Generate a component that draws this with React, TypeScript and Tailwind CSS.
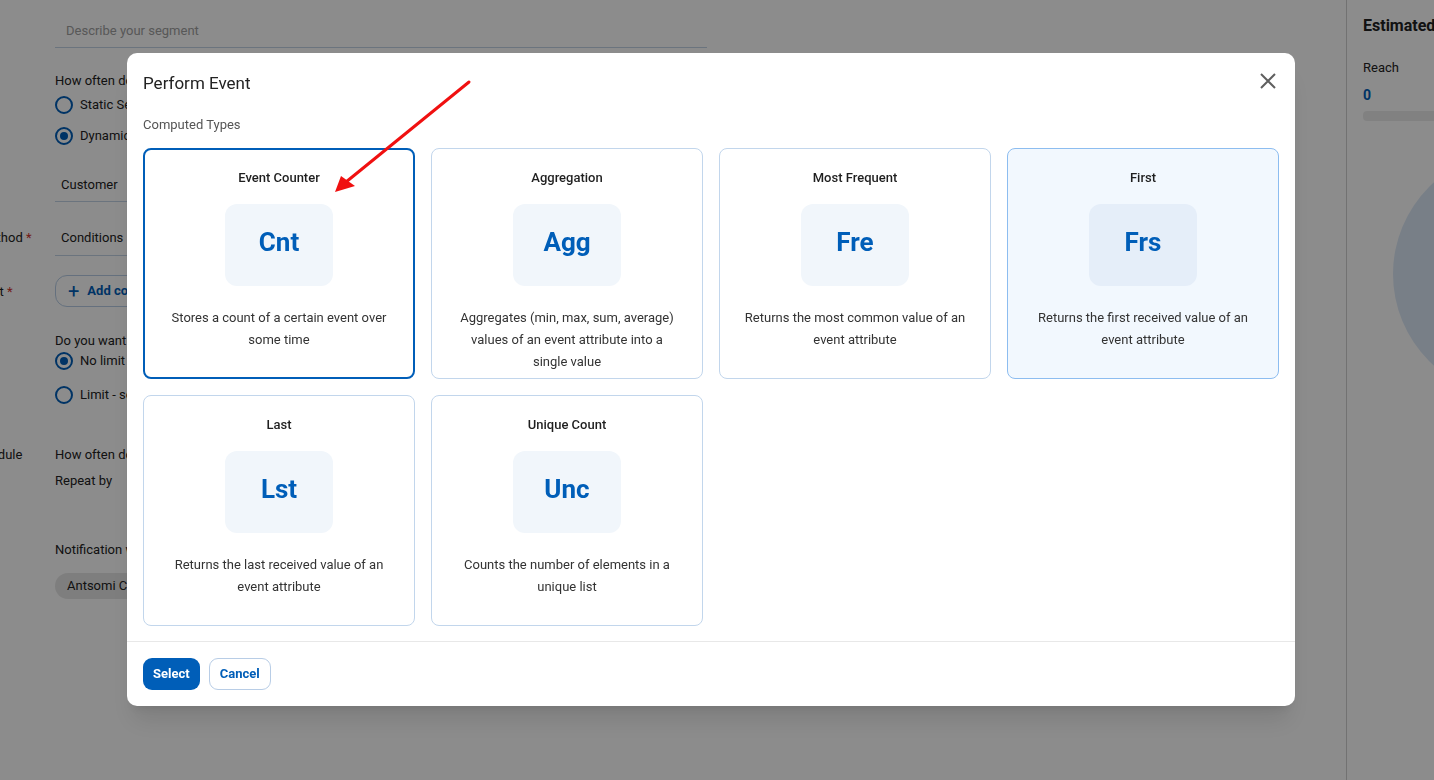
import React from "react";

const font = { fontFamily: "Roboto, 'Noto Sans', Arial, sans-serif" };

function Radio({ checked, label }: { checked?: boolean; label: string }) {
  return (
    <div className="flex items-center gap-[7px] h-[20px]">
      <span className="w-[18px] h-[18px] rounded-full border-2 border-[#005eb8] flex items-center justify-center bg-white">
        {checked && <span className="w-[8px] h-[8px] rounded-full bg-[#005eb8]" />}
      </span>
      <span className="text-[13px] text-[#222]">{label}</span>
    </div>
  );
}

function Background() {
  return (
    <div className="flex h-[780px] w-full overflow-hidden bg-white text-[#222]">
      <div className="flex-1 min-w-0">
        <div className="-ml-[100px] grid grid-cols-[155px_1fr] text-[12px]">
          <div />
          <div className="pt-[23px] w-[652px] border-b border-[#c3d3e6] pb-[8px] pl-[11px] text-[#a0a0a0] text-[13px] leading-[16px]">
            Describe your segment
          </div>

          <div />
          <div className="mt-[25px] text-[13px] leading-[16px]">How often do you want to update this segment?</div>
          <div />
          <div className="mt-[6px] flex flex-col gap-[11px]">
            <Radio label="Static Segment" />
            <Radio checked label="Dynamic Segment" />
          </div>

          <div />
          <div className="mt-[31px] w-[400px] border-b border-[#c3d3e6] pb-[8px] pl-[6px] text-[13px] leading-[16px]">Customer</div>

          <div className="mt-[28px] text-[13px] leading-[16px] whitespace-nowrap">
            Computation method <span className="text-[#d0342c]">*</span>
          </div>
          <div className="mt-[28px] w-[400px] border-b border-[#c3d3e6] pb-[9px] pl-[6px] text-[13px] leading-[16px]">Conditions</div>

          <div className="mt-[21px] pl-[5px] text-[13px] leading-[16px] whitespace-nowrap self-center">
            Segment content <span className="text-[#d0342c]">*</span>
          </div>
          <div className="mt-[19px]">
            <div className="inline-flex items-center gap-2 h-[32px] px-[12px] rounded-xl border border-[#b8cde6] text-[#005eb8] text-[13px] font-bold">
              <span className="text-[20px] font-normal leading-none">+</span> Add condition
            </div>
          </div>

          <div />
          <div className="mt-[26px] text-[13px] leading-[16px]">Do you want to limit the segment size?</div>
          <div />
          <div className="mt-[2px] flex flex-col gap-[14px]">
            <Radio checked label="No limit" />
            <Radio label="Limit - set a maximum size" />
          </div>

          <div className="mt-[42px] -ml-[8px] text-[13px] leading-[16px] whitespace-nowrap">Computation schedule</div>
          <div className="mt-[42px] text-[13px] leading-[16px]">How often do you want to compute?</div>
          <div />
          <div className="mt-[10px] text-[13px] leading-[16px]">Repeat by</div>

          <div />
          <div className="mt-[53px] text-[13px] leading-[16px]">Notification when the segment is computed</div>
          <div />
          <div className="mt-[15px]">
            <span className="inline-flex items-center h-[26px] px-[12px] rounded-full bg-[#e6e6e6] text-[13px]">Antsomi Cdp</span>
          </div>
        </div>
      </div>
      <div className="w-[88px] shrink-0 border-l border-[#cfcfcf] pl-[16px]">
        <div className="mt-[16px] text-[16px] font-bold leading-[20px] whitespace-nowrap">Estimated size</div>
        <div className="mt-[24px] text-[13px] leading-[16px]">Reach</div>
        <div className="mt-[11px] text-[14px] font-bold text-[#005eb8] leading-[16px]">0</div>
        <div className="mt-[8px] h-[10px] w-[200px] rounded bg-[#ececec]" />
        <div className="mt-[30px] ml-[30px] w-[246px] h-[246px] rounded-full bg-[#dbe8f6] shrink-0" />
      </div>
    </div>
  );
}

type CardT = { title: string; abbr: string; desc: string; state?: "selected" | "hover" };

const cards: CardT[] = [
  { title: "Event Counter", abbr: "Cnt", desc: "Stores a count of a certain event over some time", state: "selected" },
  { title: "Aggregation", abbr: "Agg", desc: "Aggregates (min, max, sum, average) values of an event attribute into a single value" },
  { title: "Most Frequent", abbr: "Fre", desc: "Returns the most common value of an event attribute" },
  { title: "First", abbr: "Frs", desc: "Returns the first received value of an event attribute", state: "hover" },
  { title: "Last", abbr: "Lst", desc: "Returns the last received value of an event attribute" },
  { title: "Unique Count", abbr: "Unc", desc: "Counts the number of elements in a unique list" },
];

function Card({ c }: { c: CardT }) {
  const box =
    c.state === "selected"
      ? "border-2 border-[#005eb8] bg-white pt-[19px] px-[23px]"
      : c.state === "hover"
      ? "border border-[#8dbdf0] bg-[#f2f8fe] pt-5 px-6"
      : "border border-[#c2d6ec] bg-white pt-5 px-6";
  return (
    <div className={`h-[231px] rounded-[8px] flex flex-col items-center text-center ${box}`}>
      <div className="text-[13px] leading-[18px] font-medium text-[#1f1f1f]">{c.title}</div>
      <div
        className={`mt-[17px] w-[108px] h-[82px] pb-[5px] rounded-[12px] flex items-center justify-center text-[26px] font-bold text-[#005eb8] ${
          c.state === "hover" ? "bg-[#e5eef9]" : "bg-[#f1f6fb]"
        }`}
      >
        {c.abbr}
      </div>
      <p className="mt-[21px] text-[13px] leading-[22px] text-[#333]">{c.desc}</p>
    </div>
  );
}

function Modal() {
  return (
    <div className="w-[1168px] h-[653px] rounded-[10px] bg-white shadow-xl flex flex-col">
      <div className="flex items-center justify-between px-4 pt-[18px]">
        <div className="text-[17px] leading-[24px] text-[#222]">Perform Event</div>
        <svg width="16" height="16" viewBox="0 0 16 16" className="mr-[3px] -mt-[5px]">
          <path d="M1 1 L15 15 M15 1 L1 15" stroke="#5f5f5f" strokeWidth="2" strokeLinecap="butt" />
        </svg>
      </div>
      <div className="px-4 mt-[21px] text-[13px] leading-[18px] text-[#555]">Computed Types</div>
      <div className="px-4 mt-[14px] grid grid-cols-4 gap-4">
        {cards.map((c) => (
          <Card key={c.title} c={c} />
        ))}
      </div>
      <div className="mt-auto border-t border-[#e8e8e8] px-4 pt-4 pb-4 flex items-center gap-[9px]">
        <button className="h-[32px] px-[10px] rounded-[9px] bg-[#005eb8] text-white text-[13px] font-bold">Select</button>
        <button className="h-[32px] px-[10px] rounded-[9px] border border-[#b8cde6] bg-white text-[#005eb8] text-[13px] font-bold">
          Cancel
        </button>
      </div>
    </div>
  );
}

export default function App() {
  return (
    <div className="relative w-full h-[780px] overflow-hidden" style={font}>
      <Background />
      <div className="fixed inset-0 bg-black/45 flex items-start pl-[127px] pt-[53px]">
        <Modal />
      </div>
      <svg className="fixed inset-0 pointer-events-none" width="1434" height="780">
        <line x1="469" y1="82" x2="346" y2="182" stroke="#f01010" strokeWidth="3" strokeLinecap="round" />
        <polygon points="335,192 341,176 355,186" fill="#f01010" />
      </svg>
    </div>
  );
}
